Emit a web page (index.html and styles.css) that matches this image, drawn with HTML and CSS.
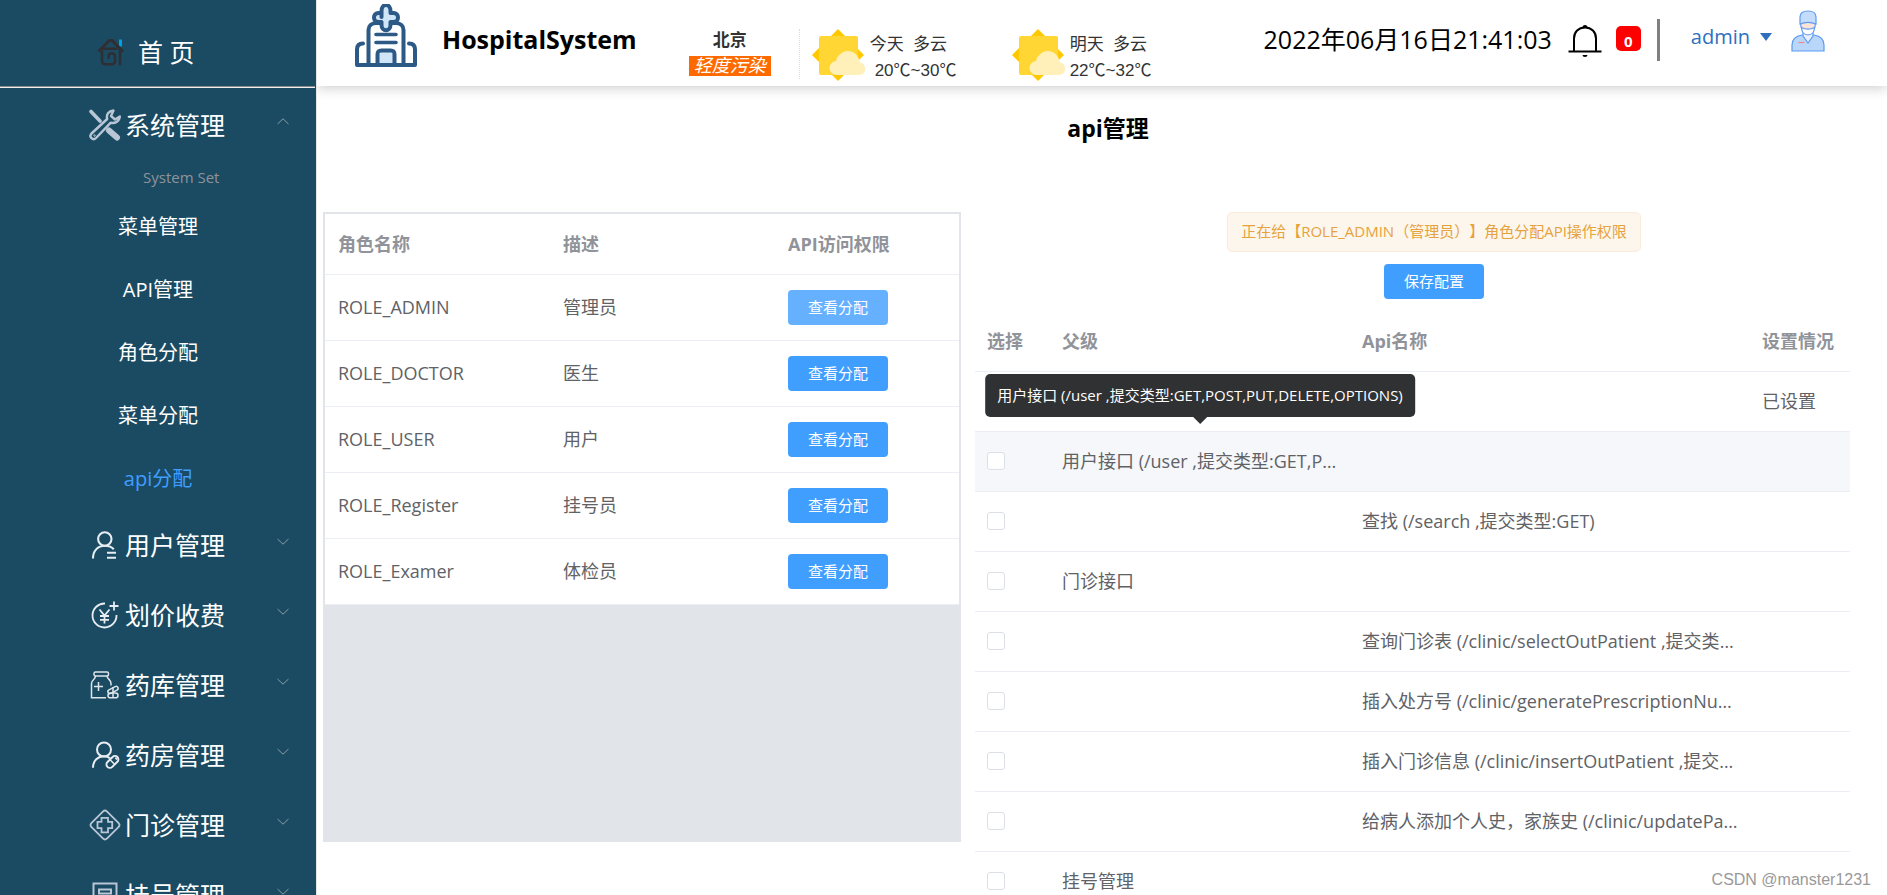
FILE: index.html
```html
<!DOCTYPE html>
<html lang="zh-CN">
<head>
<meta charset="utf-8">
<title>HospitalSystem</title>
<link rel="stylesheet" href="styles.css">
</head>
<body>
<div class="app">
  <nav class="sidebar">
    <a class="home" href="#">
      <svg class="home-icon" viewBox="0 0 28 28" fill="none" stroke="#2f2f33" stroke-width="2.6">
        <path d="M23.500 1.500v7" stroke="#00a0e9" stroke-width="3"/>
        <path d="M1.500 13.500 12.500 2.500h2.500L26 13.500" stroke-width="3"/>
        <path d="M5 12.500V22c0 2.500 1 4.200 3.500 4.200h6c2.500 0 3.500-1.500 3.500-3.500v-4c0-2.400-1.300-3.400-3.200-3.400-2 0-3.200 1-3.200 3v2.400M4.500 10.800h16M23 10v17.200"/>
      </svg>
      <span>首 页</span>
    </a>
    <hr class="rule">
    <ul class="menu">
      <li>
        <a class="group" href="#">
          <svg class="group-icon" viewBox="0 0 32 32" fill="none" stroke="#b9c6d6">
            <path d="M2 2.500 11 12" stroke-width="3.600" stroke-linecap="round"/>
            <path d="M20 21.500l8 7" stroke-width="6" stroke-linecap="round"/>
            <path d="M24.500 1.500c-5 .5-7.500 4-6.300 8.500L2.500 24.500c-3 3.500 1.500 7.500 4.500 4.500L21.500 13.800c5 .8 9-1.800 9.300-6.300L26 10.500l-4-3.500z" stroke-width="2.400" stroke-linejoin="round"/>
            <circle cx="5.500" cy="26.500" r=".8"/>
          </svg>
          <span class="group-text">系统管理</span>
          <svg class="chevron" viewBox="0 0 12 7"><path d="M.5 6 6 .8 11.500 6"/></svg>
        </a>
        <div class="caption">System Set</div>
        <ul class="submenu">
          <li><a href="#">菜单管理</a></li>
          <li><a href="#">API管理</a></li>
          <li><a href="#">角色分配</a></li>
          <li><a href="#">菜单分配</a></li>
          <li><a class="active" href="#">api分配</a></li>
        </ul>
      </li>
      <li><a class="group" href="#">
        <svg class="group-icon" viewBox="0 0 32 32" fill="none" stroke="#e8edf1" stroke-width="2.100">
          <circle cx="15.800" cy="10" r="6.700"/><path d="M4 29.500c0-8 5-12.800 11.800-12.800 4 0 7 1.200 9 3.600M18 23.700h9M18 28.700h9"/>
        </svg>
        <span class="group-text">用户管理</span>
        <svg class="chevron" viewBox="0 0 12 7"><path d="M.5 1 6 6.200 11.500 1"/></svg>
      </a></li>
      <li><a class="group" href="#">
        <svg class="group-icon" viewBox="0 0 32 32" fill="none" stroke="#e8edf1" stroke-width="1.800">
          <path d="M16 4.500A12 12 0 1 0 27.500 16M25 2.500v9M20.500 7h9M10.500 10.500l5 6 5-6M15.500 16.500v8M11 17h9M11 20.800h9"/>
        </svg>
        <span class="group-text">划价收费</span>
        <svg class="chevron" viewBox="0 0 12 7"><path d="M.5 1 6 6.200 11.500 1"/></svg>
      </a></li>
      <li><a class="group" href="#">
        <svg class="group-icon" viewBox="0 0 32 32" fill="none" stroke="#dfe6ea" stroke-width="1.500">
          <rect x="5" y="3" width="14.500" height="4" rx="1.500"/><path d="M6.500 7c0 4-4 3.500-4 7.500v14.300h14.500M18 7c.5 3.500 4 3.500 4 7.500v2M9.500 13v9M5 17.500h9"/>
          <rect x="19" y="24" width="10" height="4.800" rx="2.400"/><rect x="18.500" y="19" width="11" height="4" rx="2" transform="rotate(-28 24 21)"/><path d="M24 18v11"/>
        </svg>
        <span class="group-text">药库管理</span>
        <svg class="chevron" viewBox="0 0 12 7"><path d="M.5 1 6 6.200 11.500 1"/></svg>
      </a></li>
      <li><a class="group" href="#">
        <svg class="group-icon" viewBox="0 0 32 32" fill="none" stroke="#e8edf1" stroke-width="2">
          <circle cx="15" cy="10.500" r="7"/><path d="M4 28.800C4 21.500 9 17.200 15 17.200c2.500 0 4.500.7 6 2"/>
          <rect x="16.500" y="19.500" width="14" height="6.800" rx="3.400" transform="rotate(-45 23.500 23)"/><path d="M20.800 20.500l5 5M26.200 18.800l2 1.800" stroke-width="1.500"/>
        </svg>
        <span class="group-text">药房管理</span>
        <svg class="chevron" viewBox="0 0 12 7"><path d="M.5 1 6 6.200 11.500 1"/></svg>
      </a></li>
      <li><a class="group" href="#">
        <svg class="group-icon" viewBox="0 0 32 32" fill="none" stroke="#b9c6d6" stroke-width="1.800">
          <rect x="5" y="5" width="22" height="22" rx="3" transform="rotate(45 16 16)"/><path d="M12.500 8.800h6.500v4h4.200v6.400H19v4.200h-6.500v-4.200H8.500v-6.400h4z"/>
        </svg>
        <span class="group-text">门诊管理</span>
        <svg class="chevron" viewBox="0 0 12 7"><path d="M.5 1 6 6.200 11.500 1"/></svg>
      </a></li>
      <li><a class="group" href="#">
        <svg class="group-icon" viewBox="0 0 32 32" fill="none" stroke="#b9c6d6" stroke-width="2">
          <path d="M4.500 4.500h23v24h-23zM10 10.500h12v4H10zM9 20h14"/>
        </svg>
        <span class="group-text">挂号管理</span>
        <svg class="chevron" viewBox="0 0 12 7"><path d="M.5 1 6 6.200 11.500 1"/></svg>
      </a></li>
    </ul>
  </nav>

  <div class="page">
    <header class="topbar">
      <svg class="logo" viewBox="0 0 62 64" fill="none" stroke="#2d5986" stroke-width="4" stroke-linejoin="round" stroke-linecap="round">
        <path d="M13.500 61V26c0-4 3-7 8-7h19c5 0 8 3 8 7v35"/>
        <path d="M26.500 14V8c0-8 9-8 9 0v2h3c6 0 6 9 0 9h-3v3c0 7-9 7-9 0v-3h-3c-6 0-6-9 0-9h3z" fill="#cfe5f8" transform="translate(0 -1)"/>
        <path d="M21 30.500h20M21 38.500h20" stroke-width="3.600"/>
        <path d="M22.500 61V50.500c0-3 1-4 4-4h9c3 0 4 1 4 4V61z" fill="#cfe5f8"/>
        <path d="M8 39.500c-4 0-6 2-6 6V61h58V45.500c0-4-2-6-6-6"/>
      </svg>
      <h1 class="brand">HospitalSystem</h1>
      <div class="weather">
        <div class="city">
          <strong>北京</strong>
          <em class="air">轻度污染</em>
        </div>
        <div class="day">
          <svg class="sun" viewBox="0 0 54 52"><path d="M26 0l26 26-26 26L0 26z" fill="#ffc800"/><rect x="7" y="7" width="39" height="39" rx="2" fill="#ffd633"/><path d="M25 46a7 7 0 0 1-1-14c1-5 6-10 12-10s11 5 12 11.500c7 1 7 12.500-1 12.500z" fill="#fff0ba"/></svg>
          <div class="forecast"><span>今天&nbsp; 多云</span><span class="temp">20℃~30℃</span></div>
        </div>
        <div class="day">
          <svg class="sun" viewBox="0 0 54 52"><path d="M26 0l26 26-26 26L0 26z" fill="#ffc800"/><rect x="7" y="7" width="39" height="39" rx="2" fill="#ffd633"/><path d="M25 46a7 7 0 0 1-1-14c1-5 6-10 12-10s11 5 12 11.500c7 1 7 12.500-1 12.500z" fill="#fff0ba"/></svg>
          <div class="forecast"><span>明天&nbsp; 多云</span><span>22℃~32℃</span></div>
        </div>
      </div>
      <div class="tools">
        <time class="clock">2022年06月16日21:41:03</time>
        <svg class="bell" viewBox="0 0 34 34" fill="none" stroke="#000" stroke-width="2"><path d="M6 27V14.500C6 8 10.500 3.500 17 3.500S28 8 28 14.500V27M.5 27.500h33"/><path d="M14.500 3.500a2.500 2.500 0 0 1 5 0zM14.500 31h5a2.500 2 0 0 1-5 0z" fill="#000" stroke="none"/></svg>
        <span class="count">0</span>
        <span class="bar"></span>
        <button class="user" type="button">admin<svg class="caret" viewBox="0 0 12 8"><path d="M0 0h12L6 8z" fill="#2f6fbd"/></svg></button>
        <svg class="avatar" viewBox="0 0 34 42" stroke="#5c9bf2" stroke-width="1.200">
          <path d="M1 41V35c0-6 4-9 10-10h12c6 1 10 4 10 10v6z" fill="#b9d6fb"/>
          <path d="M12 22v4l5 7 5-7v-4z" fill="#e8f1fd"/>
          <path d="M9.500 12c0 7 3 12 7.500 12s7.500-5 7.500-12z" fill="#fce3d8"/>
          <path d="M9 14V7c0-4 3-6 8-6s8 2 8 6v7c-5-2-11-2-16 0z" fill="#c4dcfb"/>
          <path d="M10.500 17.500c4 2 9 2 13 0-.2 4-2.500 7.500-6.500 7.500s-6.300-3.500-6.500-7.500z" fill="#fff"/>
          <path d="M7.500 32.500h6" stroke="#f08a8a"/>
        </svg>
      </div>
    </header>

    <main class="content">
      <h2 class="title">api管理</h2>
      <div class="panels">
        <section class="roles">
          <table class="grid role-table">
            <colgroup><col class="c-role"><col class="c-role"><col></colgroup>
            <thead><tr><th>角色名称</th><th>描述</th><th>API访问权限</th></tr></thead>
            <tbody>
              <tr><td>ROLE_ADMIN</td><td>管理员</td><td><button class="btn focus" type="button">查看分配</button></td></tr>
              <tr><td>ROLE_DOCTOR</td><td>医生</td><td><button class="btn" type="button">查看分配</button></td></tr>
              <tr><td>ROLE_USER</td><td>用户</td><td><button class="btn" type="button">查看分配</button></td></tr>
              <tr><td>ROLE_Register</td><td>挂号员</td><td><button class="btn" type="button">查看分配</button></td></tr>
              <tr><td>ROLE_Examer</td><td>体检员</td><td><button class="btn" type="button">查看分配</button></td></tr>
            </tbody>
          </table>
        </section>
        <section class="apis">
          <div class="actions">
            <div class="notice">正在给【ROLE_ADMIN（管理员）】角色分配API操作权限</div>
            <button class="btn" type="button">保存配置</button>
          </div>
          <table class="grid api-table">
            <colgroup><col class="c-check"><col class="c-parent"><col><col class="c-state"></colgroup>
            <thead><tr><th>选择</th><th>父级</th><th>Api名称</th><th>设置情况</th></tr></thead>
            <tbody>
              <tr><td><input type="checkbox" aria-label="选择"></td><td></td><td></td><td>已设置</td></tr>
              <tr class="hover"><td><input type="checkbox" aria-label="用户接口"></td><td class="has-tip"><div class="clip">用户接口 (/user ,提交类型:GET,POST,PUT,DELETE,OPTIONS)</div><div class="tip" role="tooltip">用户接口 (/user ,提交类型:GET,POST,PUT,DELETE,OPTIONS)</div></td><td></td><td></td></tr>
              <tr><td><input type="checkbox" aria-label="查找"></td><td></td><td><div class="clip">查找 (/search ,提交类型:GET)</div></td><td></td></tr>
              <tr><td><input type="checkbox" aria-label="门诊接口"></td><td>门诊接口</td><td></td><td></td></tr>
              <tr><td><input type="checkbox" aria-label="查询门诊表"></td><td></td><td><div class="clip">查询门诊表 (/clinic/selectOutPatient ,提交类型:GET)</div></td><td></td></tr>
              <tr><td><input type="checkbox" aria-label="插入处方号"></td><td></td><td><div class="clip">插入处方号 (/clinic/generatePrescriptionNumber ,提交类型:GET)</div></td><td></td></tr>
              <tr><td><input type="checkbox" aria-label="插入门诊信息"></td><td></td><td><div class="clip">插入门诊信息 (/clinic/insertOutPatient ,提交类型:POST)</div></td><td></td></tr>
              <tr><td><input type="checkbox" aria-label="给病人添加个人史"></td><td></td><td><div class="clip">给病人添加个人史，家族史 (/clinic/updatePatient ,提交类型:PUT)</div></td><td></td></tr>
              <tr><td><input type="checkbox" aria-label="挂号管理"></td><td>挂号管理</td><td></td><td></td></tr>
            </tbody>
          </table>
        </section>
      </div>
    </main>
  </div>
  <div class="watermark">CSDN @manster1231</div>
</div>
</body>
</html>
```
FILE: styles.css
```css
* { box-sizing: border-box; }

body {
  margin: 0;
  font-family: "Open Sans", "Noto Sans CJK SC", sans-serif;
  text-spacing-trim: space-all;
  color: #606266;
  background: #fff;
}

a { color: inherit; text-decoration: none; }
ul { margin: 0; padding: 0; list-style: none; }
button { font-family: inherit; cursor: pointer; }
svg { display: block; flex: none; }

.app { display: flex; height: 100vh; overflow: hidden; position: relative; }

/* sidebar */
.sidebar {
  flex: none;
  width: 317px;
  overflow: hidden;
  background: #1a4b63;
  border-right: 1px solid #e6e6e6;
  color: #fff;
}
.home {
  display: flex;
  align-items: center;
  gap: 13px;
  height: 86px;
  padding: 18px 0 0 97px;
  font-size: 25px;
  line-height: 32px;
}
.home-icon { width: 28px; height: 28px; }
.rule { margin: 0 1px 2px 0; border: 0; border-top: 1px solid #8b8b8b; border-bottom: 1px solid #eee; }
.group {
  display: flex;
  align-items: center;
  gap: 4px;
  height: 70px;
  padding: 0 27px 0 89px;
  font-size: 25px;
  line-height: 32px;
}
.group-icon { width: 32px; height: 32px; }
.group-text { flex: 1; }
.chevron { width: 12px; height: 7px; margin-bottom: 8px; fill: none; stroke: #8f9ba5; }
.caption {
  height: 35px;
  padding-left: 143px;
  font-size: 15px;
  line-height: 34px;
  color: #909399;
}
.submenu a { display: block; font-size: 20px; line-height: 63px; text-align: center; }
.submenu .active { color: #409eff; }

/* top bar */
.page { flex: 1; min-width: 0; display: flex; flex-direction: column; }
.topbar {
  flex: none;
  display: flex;
  align-items: flex-start;
  height: 86px;
  padding: 0 62px 0 38px;
  box-shadow: 0 2px 12px rgba(0, 0, 0, .2);
  clip-path: inset(0 0 -20px 0);
}
.logo { width: 62px; height: 64px; margin-top: 4px; }
.brand { margin: 21px 52px 0 25px; font-size: 25px; line-height: 36px; color: #000; }
.weather {
  display: flex;
  padding-top: 29px;
  font-family: "Liberation Sans", "Noto Sans CJK SC", sans-serif;
  font-size: 17px;
  color: #333;
}
.city {
  display: flex;
  flex-direction: column;
  align-items: center;
  gap: 3px;
  width: 111px;
  height: 50px;
  padding-right: 28px;
  border-right: 1px dotted #ddd;
  line-height: 24px;
}
.air { width: 82px; background: #ff6a00; color: #fff; font-size: 18px; line-height: 20px; text-align: center; }
.day { display: flex; gap: 4px; width: 200px; }
.day:nth-child(2) { margin-left: 12px; }
.sun { width: 54px; height: 52px; }
.forecast { display: flex; flex-direction: column; line-height: 26px; padding-top: 3px; }
.temp { padding-left: 5px; }
.tools { display: flex; align-items: flex-start; margin-left: auto; }
.clock { margin-top: 21px; font-size: 25px; line-height: 36px; color: #000; }
.bell { width: 34px; height: 34px; margin: 24px 14px 0 16px; }
.count {
  width: 25px;
  height: 25px;
  margin-top: 26px;
  border-radius: 5px;
  background: #f00;
  color: #fff;
  font-size: 15px;
  font-weight: 700;
  line-height: 30px;
  text-align: center;
}
.bar { width: 3px; height: 42px; margin: 19px 31px 0 16px; background: #808080; }
.user {
  display: flex;
  align-items: center;
  gap: 10px;
  margin-top: 20px;
  padding: 0;
  border: 0;
  background: none;
  font-size: 20px;
  line-height: 34px;
  color: #2f6fbd;
}
.caret { width: 12px; height: 8px; }
.avatar { width: 34px; height: 42px; margin: 10px 0 0 19px; }

/* content */
.content { flex: 1; min-height: 0; padding: 24px 37px 0 6px; }
.title { margin: 0 0 66px 43px; font-size: 23px; line-height: 36px; text-align: center; color: #000; }
.panels { display: grid; grid-template-columns: 638fr 889fr; align-items: start; }

.grid { width: 100%; border-collapse: collapse; table-layout: fixed; font-size: 18px; line-height: 24px; background: #fff; }
.grid th, .grid td { height: 60px; padding: 0 13px; border-bottom: 1px solid #ebeef5; text-align: left; }
.grid th { color: #909399; font-weight: 700; white-space: nowrap; }

.roles { min-height: 630px; border: 2px solid #e1e5ea; background: #e1e5ea; }
.role-table td { height: 66px; }
.c-role { width: 225px; }

.btn {
  display: block;
  width: 100px;
  height: 35px;
  padding: 0;
  border: 0;
  border-radius: 4px;
  background: #409eff;
  color: #fff;
  font-size: 15px;
  line-height: 35px;
}
.btn.focus { background: #66b1ff; }

.apis { padding-left: 14px; }
.actions { display: flex; flex-direction: column; align-items: center; gap: 12px; padding: 0 0 12px 43px; }
.notice {
  height: 40px;
  padding: 0 13px;
  border: 1px solid #faecd8;
  border-radius: 5px;
  background: #fdf6ec;
  color: #e6a23c;
  font-size: 15px;
  line-height: 37px;
}
.api-table .hover { background: #f5f7fa; }
.c-check { width: 75px; }
.c-parent { width: 300px; }
.c-state { width: 100px; }
.clip { overflow: hidden; white-space: nowrap; text-overflow: ellipsis; }
.api-table th, .api-table td { padding: 0 12px; }
.grid input {
  appearance: none;
  display: block;
  width: 18px;
  height: 18px;
  margin: 0;
  border: 1px solid #dcdfe6;
  border-radius: 3px;
  background: #fff;
}
.has-tip { position: relative; }
.tip {
  position: absolute;
  left: 50%;
  bottom: 74px;
  transform: translateX(-50%);
  padding: 10px 12px;
  border-radius: 5px;
  background: #303133;
  color: #fff;
  font-size: 15px;
  line-height: 23px;
  white-space: nowrap;
}
.tip::after {
  content: "";
  position: absolute;
  top: 100%;
  left: 50%;
  margin-left: -7px;
  border: 7px solid transparent;
  border-top-color: #303133;
  border-bottom-width: 0;
}

.watermark {
  position: absolute;
  right: 16px;
  bottom: 3px;
  font-size: 16px;
  line-height: 24px;
  color: #999;
  font-family: "Liberation Sans", sans-serif;
}
```
